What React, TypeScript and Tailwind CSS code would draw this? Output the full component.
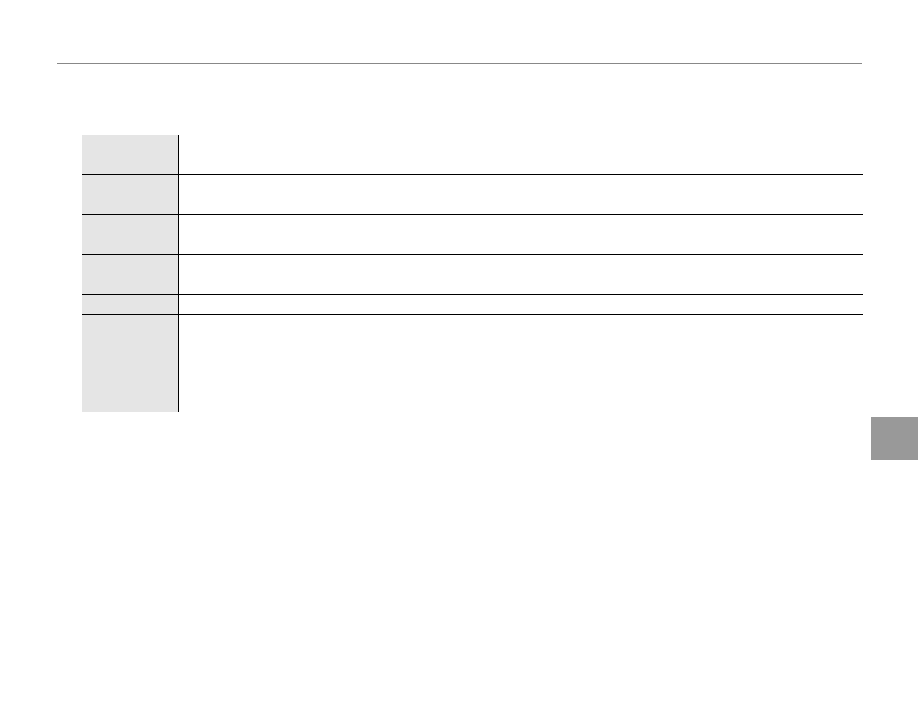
const rows = [39, 40, 40, 40, 20, 98];

export default function App() {
  return (
    <div className="flex h-[726px] w-[918px] flex-col bg-white font-['Liberation_Sans',sans-serif]">
      <div className="ml-[57px] mt-[63px] h-px w-[805px] bg-[#888888]" />
      <div className="ml-[82px] mt-[71px] flex w-[781px] flex-col">
        {rows.map((h, i) => (
          <div
            key={i}
            className={`flex ${i > 0 ? "border-t border-black" : ""}`}
            style={{ height: h }}
          >
            <div className="w-[96px] shrink-0 bg-[#e5e5e5]" />
            <div className="flex-1 border-l border-black" />
          </div>
        ))}
      </div>
      <div className="mt-[5px] h-[43px] w-[47px] self-end bg-[#999999]" />
    </div>
  );
}
